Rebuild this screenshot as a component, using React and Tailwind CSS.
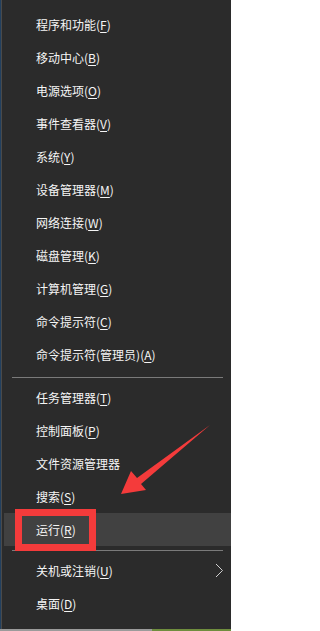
import React from "react";

const groups = [
  [
    { label: "程序和功能", key: "F" },
    { label: "移动中心", key: "B" },
    { label: "电源选项", key: "O" },
    { label: "事件查看器", key: "V" },
    { label: "系统", key: "Y" },
    { label: "设备管理器", key: "M" },
    { label: "网络连接", key: "W" },
    { label: "磁盘管理", key: "K" },
    { label: "计算机管理", key: "G" },
    { label: "命令提示符", key: "C" },
    { label: "命令提示符(管理员)", key: "A" },
  ],
  [
    { label: "任务管理器", key: "T" },
    { label: "控制面板", key: "P" },
    { label: "文件资源管理器" },
    { label: "搜索", key: "S" },
    { label: "运行", key: "R", active: true },
  ],
  [
    { label: "关机或注销", key: "U", submenu: true },
    { label: "桌面", key: "D" },
  ],
];

function MenuItem({ item }) {
  return (
    <div
      className={
        item.active
          ? "h-[33px] ml-[2px] pl-[32px] flex items-center bg-[#414141]"
          : "h-[33px] pl-[34px] flex items-center"
      }
    >
      <span className="text-[12px] leading-none text-[#f5f5f5]">
        {item.label}
        {item.key && (
          <>
            (<span className="underline underline-offset-2">{item.key}</span>)
          </>
        )}
      </span>
      {item.submenu && (
        <svg className="ml-auto mr-[7px]" width="9" height="15" viewBox="0 0 9 15">
          <polyline points="1,1 7.5,7.5 1,14" fill="none" stroke="#d0d0d0" strokeWidth="1" />
        </svg>
      )}
    </div>
  );
}

export default function App() {
  return (
    <div
      className="relative w-[231px] h-[631px] flex flex-col bg-[#2b2b2b] overflow-hidden"
      style={{ fontFamily: '"Noto Sans CJK SC", "Noto Sans", sans-serif' }}
    >
      <div className="h-[629px] bg-[#22405f] pl-[1px]">
        <div className="h-full border-l border-[#4a4a4a] bg-[#2b2b2b] pt-[8px]">
          {groups.map((group, i) => (
            <div key={i}>
              {i > 0 && (
                <div className={i === 1 ? "pt-[6px] pb-[3px]" : "pt-[4px] pb-[3px]"}>
                  <div className="h-px ml-[10px] mr-[8px] bg-[#7a7a7a]" />
                </div>
              )}
              {group.map((item) => (
                <MenuItem key={item.label} item={item} />
              ))}
            </div>
          ))}
        </div>
      </div>
      <div className="h-[2px] flex">
        <div className="w-[152px] bg-[#9b9b9b]" />
        <div className="flex-1 bg-[#6f8d3e]" />
      </div>

      {/* annotation */}
      <div className="absolute left-[15px] top-[509px] w-[81px] h-[42px] border-[7px] border-[#f43b3b]" />
      <svg className="absolute inset-0 pointer-events-none" width="231" height="631" viewBox="0 0 231 631">
        <polygon
          points="210,425 137,478 131,471 121,494 146,490 141,484"
          fill="#f43b3b"
        />
      </svg>
    </div>
  );
}
